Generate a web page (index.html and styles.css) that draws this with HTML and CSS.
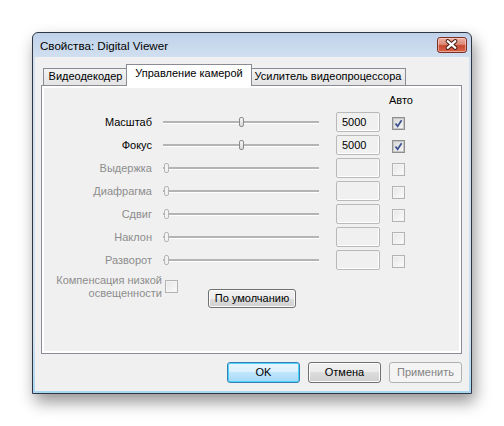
FILE: index.html
```html
<!DOCTYPE html>
<html lang="ru">
<head>
<meta charset="utf-8">
<title>Свойства: Digital Viewer</title>
<link rel="stylesheet" href="styles.css">
</head>
<body>
<div class="stage">
  <div class="window">
    <div class="titlebar">
      <span class="title">Свойства: Digital Viewer</span>
      <div class="close">
        <svg width="30" height="16" viewBox="0 0 30 16">
          <path d="M11 4 L19 11 M19 4 L11 11" stroke="#43180f" stroke-width="4.2" stroke-linecap="round" fill="none"/>
          <path d="M11 4 L19 11 M19 4 L11 11" stroke="#ffffff" stroke-width="2.2" stroke-linecap="round" fill="none"/>
        </svg>
      </div>
    </div>
    <div class="client">
      <div class="tabs">
        <div class="tab t1">Видеодекодер</div>
        <div class="tab active">Управление камерой</div>
        <div class="tab t3">Усилитель видеопроцессора</div>
      </div>
      <div class="panel">
        <div class="page">
          <div class="head"><span class="auto">Авто</span></div>
          <div class="rows">
            <div class="row">
              <span class="label">Масштаб</span>
              <div class="slider"><div class="track"></div><div class="thumb" style="left:48%"></div></div>
              <div class="value">5000</div>
              <div class="check on"><svg width="11" height="11" viewBox="0 0 11 11"><path d="M2.5 5.5 L4.6 8.3 L8.6 2.2" stroke="#3b4f8f" stroke-width="1.7" fill="none"/></svg></div>
            </div>
            <div class="row">
              <span class="label">Фокус</span>
              <div class="slider"><div class="track"></div><div class="thumb" style="left:48%"></div></div>
              <div class="value">5000</div>
              <div class="check on"><svg width="11" height="11" viewBox="0 0 11 11"><path d="M2.5 5.5 L4.6 8.3 L8.6 2.2" stroke="#3b4f8f" stroke-width="1.7" fill="none"/></svg></div>
            </div>
            <div class="row off">
              <span class="label">Выдержка</span>
              <div class="slider"><div class="track"></div><div class="thumb" style="left:0%"></div></div>
              <div class="value"></div>
              <div class="check"></div>
            </div>
            <div class="row off">
              <span class="label">Диафрагма</span>
              <div class="slider"><div class="track"></div><div class="thumb" style="left:0%"></div></div>
              <div class="value"></div>
              <div class="check"></div>
            </div>
            <div class="row off">
              <span class="label">Сдвиг</span>
              <div class="slider"><div class="track"></div><div class="thumb" style="left:0%"></div></div>
              <div class="value"></div>
              <div class="check"></div>
            </div>
            <div class="row off">
              <span class="label">Наклон</span>
              <div class="slider"><div class="track"></div><div class="thumb" style="left:0%"></div></div>
              <div class="value"></div>
              <div class="check"></div>
            </div>
            <div class="row off">
              <span class="label">Разворот</span>
              <div class="slider"><div class="track"></div><div class="thumb" style="left:0%"></div></div>
              <div class="value"></div>
              <div class="check"></div>
            </div>
          </div>
          <div class="low">
            <span class="low-label">Компенсация низкой<br>освещенности</span>
            <div class="check low-check"></div>
            <div class="btn default-btn">По умолчанию</div>
          </div>
        </div>
      </div>
      <div class="buttons">
        <div class="btn ok">OK</div>
        <div class="btn">Отмена</div>
        <div class="btn disabled">Применить</div>
      </div>
    </div>
  </div>
</div>
</body>
</html>
```

FILE: styles.css
```css
* { box-sizing: border-box; margin: 0; padding: 0; }

body {
  background: #ffffff;
  font-family: "Liberation Sans", Arial, sans-serif;
  font-size: 11px;
  color: #000;
}

.stage {
  width: 504px;
  height: 426px;
  padding: 32px 0 0 32px;
}

.window {
  width: 440px;
  height: 362px;
  border: 1px solid #2f3641;
  border-radius: 6px 6px 0 0;
  background: linear-gradient(#bfd2ea 0, #d2e0f0 26px, #d0e1f1 85%, #a7d8f2 100%);
  box-shadow: 3px 8px 16px rgba(0, 0, 0, 0.42);
  display: flex;
  flex-direction: column;
}

.titlebar {
  height: 24px;
  display: flex;
  align-items: flex-start;
  padding: 0 4px 0 7px;
}

.title {
  flex: 1;
  font-family: "Liberation Sans", sans-serif;
  font-size: 11.6px;
  line-height: 14px;
  margin-top: 6px;
  color: #000;
}

.close {
  width: 30px;
  height: 16px;
  margin-top: 4px;
  border: 1px solid #7a3226;
  border-radius: 3px;
  background: linear-gradient(#eeb0a2 0, #dd8a78 45%, #c7482f 55%, #d8664a 100%);
  box-shadow: inset 0 0 0 1px rgba(255, 220, 210, 0.55);
  display: flex;
}

.close svg { margin: -1px 0 0 -1px; }

.client {
  flex: 1;
  margin: 0 2px 2px;
  background: #f0f0f0;
  padding: 7px 7px 8px 6px;
  display: flex;
  flex-direction: column;
}

.tabs {
  height: 21px;
  display: flex;
  align-items: flex-end;
  padding-left: 2px;
}

.tab {
  height: 17px;
  border: 1px solid #898c95;
  border-bottom: none;
  background: linear-gradient(#f3f3f3, #e4e4e4);
  text-align: center;
  line-height: 15px;
  white-space: nowrap;
}

.t1 { width: 85px; }
.t3 { width: 156px; }

.tab.active {
  position: relative;
  z-index: 1;
  width: 126px;
  height: 22px;
  margin: 0 -2px -1px;
  background: #ffffff;
  line-height: 17px;
}

.panel {
  height: 269px;
  border: 1px solid #898c95;
  background: #ffffff;
  padding: 2px;
}

.page {
  height: 100%;
  background: #f0f0f0;
  padding-top: 6px;
}

.head {
  height: 13px;
  line-height: 13px;
  margin-bottom: 5px;
  padding-left: 345px;
}

.rows {
  display: flex;
  flex-direction: column;
  gap: 3px;
}

.row {
  display: flex;
  align-items: center;
  height: 20px;
}

.label {
  width: 108px;
  text-align: right;
  line-height: 13px;
  white-space: nowrap;
}

.row.off .label, .low-label { color: #8d8d8d; }

.slider {
  position: relative;
  width: 156px;
  height: 20px;
  margin-left: 11px;
}

.track {
  margin-top: 9px;
  height: 3px;
  background: #b4b4b4;
  border-bottom: 1px solid #ffffff;
}

.thumb {
  position: absolute;
  top: 5px;
  width: 5px;
  height: 10px;
  margin-left: 1px;
  border: 1px solid #8c8c8c;
  border-radius: 2px;
  background: linear-gradient(#f6f6f6, #dadada);
}

.row.off .thumb { border-color: #b6b6b6; background: #f2f2f2; }

.value {
  width: 44px;
  height: 20px;
  margin-left: 17px;
  border: 1px solid #b9b9b9;
  border-radius: 2px;
  box-shadow: inset -1px -1px 0 #ffffff;
  padding-left: 5px;
  line-height: 18px;
}

.check {
  width: 13px;
  height: 13px;
  margin-left: 12px;
  align-self: flex-start;
  margin-top: 5px;
  border: 1px solid #b3b3b3;
  background: linear-gradient(135deg, #e6e6e6, #fbfbfb);
  box-shadow: inset 0 0 0 1px #f4f4f4;
}

.check.on {
  border-color: #8e8f8f;
  background: linear-gradient(135deg, #d7d7d7, #f7f7f7);
  box-shadow: inset 0 0 0 1px #c4c4c4;
}

.check svg { display: block; margin: 0; }

.low {
  display: flex;
  align-items: flex-start;
  margin-top: 4px;
}

.low-label {
  width: 118px;
  text-align: right;
  line-height: 13px;
  white-space: nowrap;
}

.low-check { margin-left: 3px; margin-top: 6px; }

.btn {
  width: 73px;
  height: 21px;
  border: 1px solid #707070;
  border-radius: 3px;
  background: linear-gradient(#f2f2f2 0, #ebebeb 50%, #dddddd 50%, #cfcfcf 100%);
  box-shadow: inset 0 0 0 1px #fcfcfc;
  text-align: center;
  line-height: 19px;
  white-space: nowrap;
}

.default-btn {
  width: 88px;
  height: 19px;
  margin-left: 30px;
  margin-top: 15px;
  line-height: 17px;
}

.buttons {
  display: flex;
  justify-content: flex-end;
  gap: 8px;
  margin-top: 8px;
}

.btn.ok {
  border-color: #3c7fb1;
  background: linear-gradient(#eaf6fd 0, #d9f0fc 50%, #bee6fd 50%, #a7d9f5 100%);
  box-shadow: inset 0 0 0 1px #48d4ff;
}

.btn.disabled {
  border-color: #adb2b5;
  background: #f4f4f4;
  box-shadow: none;
  color: #838383;
}
```
